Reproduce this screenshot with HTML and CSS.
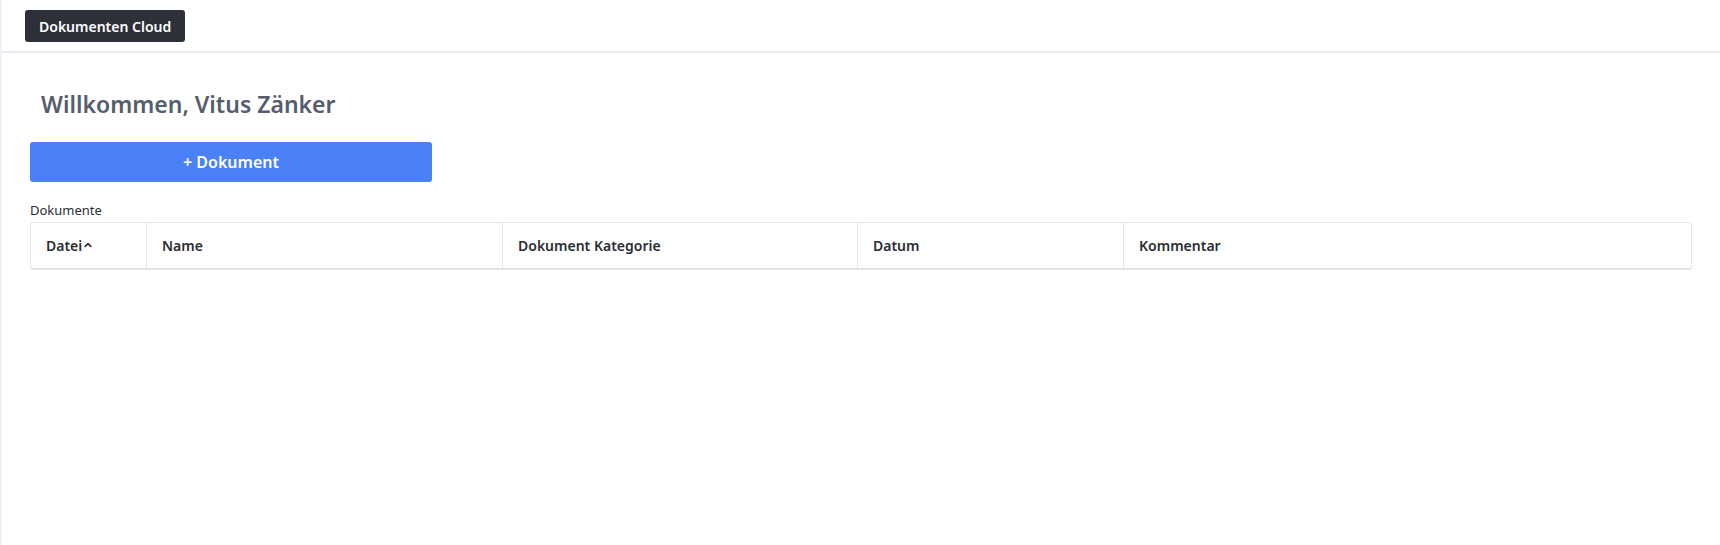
FILE: index.html
```html
<!DOCTYPE html>
<html lang="de">
<head>
<meta charset="utf-8">
<title>Dokumenten Cloud</title>
<link rel="stylesheet" href="styles.css">
</head>
<body>
<div class="app">
  <header class="topbar">
    <button class="brand">Dokumenten Cloud</button>
  </header>
  <main class="content">
    <h1 class="welcome">Willkommen, Vitus Zänker</h1>
    <button class="add-btn">+ Dokument</button>
    <div class="section-label">Dokumente</div>
    <div class="table">
      <div class="th col-datei">Datei<svg class="caret" viewBox="0 0 10 10" width="10" height="10"><path d="M2.2 6.3 L5 3.6 L7.8 6.3" fill="none" stroke="#2a2d35" stroke-width="1.7" stroke-linecap="round" stroke-linejoin="round"/></svg></div>
      <div class="th">Name</div>
      <div class="th">Dokument Kategorie</div>
      <div class="th">Datum</div>
      <div class="th">Kommentar</div>
    </div>
  </main>
</div>
</body>
</html>
```

FILE: styles.css
```css
* { box-sizing: border-box; }
html, body { margin: 0; padding: 0; height: 100%; }
body {
  font-family: "Noto Sans", "Open Sans", sans-serif;
  background: #ffffff;
  color: #2a2d35;
}
.app {
  min-height: 100%;
  border-left: 2px solid #eef0fb;
}
.topbar {
  height: 53px;
  border-bottom: 2px solid #e8e9ef;
  padding: 10px 0 0 23px;
}
.brand {
  height: 32px;
  padding: 0 14px;
  background: #2d3039;
  color: #ffffff;
  border: none;
  border-radius: 3px;
  font-family: inherit;
  font-size: 14px;
  font-weight: 600;
}
.content {
  padding: 0 28px;
  display: flex;
  flex-direction: column;
  align-items: flex-start;
}
.welcome {
  margin: 35px 0 0 11px;
  font-size: 23px;
  line-height: 32px;
  font-weight: 600;
  color: #565d6e;
}
.add-btn {
  margin-top: 22px;
  width: 402px;
  height: 40px;
  background: #4a80f8;
  color: #ffffff;
  border: none;
  border-radius: 3px;
  font-family: inherit;
  font-size: 16px;
  font-weight: 600;
}
.section-label {
  margin-top: 19px;
  font-size: 13px;
  line-height: 18px;
  color: #2a2d35;
}
.table {
  margin-top: 3px;
  align-self: stretch;
  display: grid;
  grid-template-columns: 115px 356px 355px 266px 1fr;
  border: 1px solid #e6e7ec;
  border-bottom: 2px solid #e3e4ea;
  border-radius: 3px;
}
.th {
  height: 45px;
  padding: 0 15px;
  display: flex;
  align-items: center;
  font-size: 14px;
  font-weight: 600;
  color: #2a2d35;
  border-left: 1px solid #e6e7ec;
}
.th:first-child { border-left: none; }
.caret { margin-left: 1px; margin-top: -1px; }
```
